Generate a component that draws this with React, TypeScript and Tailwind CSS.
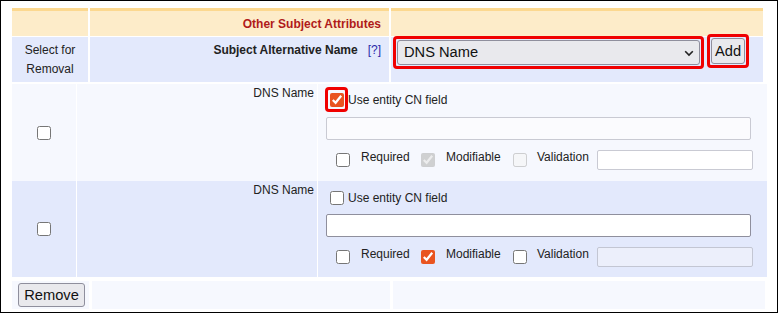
import React from 'react';

type SanProps = {
    first: boolean;
};

function Box({ checked = false, disabled = false }: { checked?: boolean; disabled?: boolean }) {
    return (
        <input
            type="checkbox"
            defaultChecked={checked}
            disabled={disabled}
            className="m-0 h-[14px] w-[14px] shrink-0 accent-[#e95420]"
        />
    );
}

function SanRow({ first }: SanProps) {
    const bg = first ? 'bg-[#f6f8fe]' : 'bg-[#e3e9fc]';
    return (
        <div className={`grid grid-cols-[64px_240px_449px] gap-x-px ${first ? 'h-[97px]' : 'h-[96px]'}`}>
            <div className={`${bg} flex items-center justify-center`}>
                <Box />
            </div>
            <div className={`${bg} pt-[2px] pr-[3px] text-right leading-[14px]`}>DNS Name</div>
            <div className={`${bg} flex flex-col`}>
                <div className={`${first ? 'mt-[3px]' : 'mt-[4px]'} flex h-[25px] items-center`}>
                    <span
                        className={`ml-[7px] flex h-[25px] w-[23px] items-center justify-center rounded-[4px] border-[3px] ${first ? 'border-[#f00000]' : 'border-transparent'}`}
                    >
                        <Box checked={first} />
                    </span>
                    <span className="leading-[14px]">Use entity CN field</span>
                </div>
                <input
                    type="text"
                    disabled={first}
                    className={`ml-[8px] ${first ? 'mt-[5px]' : 'mt-[4px]'} h-[23px] w-[425px] rounded-[2px] border ${first ? 'border-[#c9cad3] bg-[#fbfbfe]' : 'border-[#8f8f9d] bg-white'}`}
                />
                <div className="mt-[7px] flex h-[23px] items-start">
                    <span className="ml-[18px] mt-[6px] flex"><Box /></span>
                    <span className="ml-[11px] mt-[2px] w-[49px] leading-[16px]">Required</span>
                    <span className="ml-[11px] mt-[6px] flex"><Box checked disabled={first} /></span>
                    <span className="ml-[11px] mt-[2px] w-[55px] leading-[16px]">Modifiable</span>
                    <span className="ml-[12px] mt-[6px] flex"><Box disabled={first} /></span>
                    <span className="ml-[10px] mt-[2px] w-[52px] leading-[16px]">Validation</span>
                    <input
                        type="text"
                        disabled={!first}
                        className={`ml-[8px] mt-[3px] h-[20px] w-[156px] rounded-[2px] border ${first ? 'border-[#c9cad3] bg-white' : 'border-[#c3c6d3] bg-[#eceffb]'}`}
                    />
                </div>
            </div>
        </div>
    );
}

export default function App() {
    return (
        <div className="h-[313px] w-[778px] border border-black bg-white pl-[11px] pt-[7px] font-['Liberation_Sans',Arial,sans-serif] text-[12px] text-[#222]">
            {/* header */}
            <div className="grid grid-cols-[76px_299px_372px] gap-x-[2px] gap-y-px">
                <div className="h-[28px] border-t-[3px] border-[#fcd88f] bg-[#fdecc9]" />
                <div className="flex h-[28px] items-center justify-end border-t-[3px] border-[#fcd88f] bg-[#fdecc9] pr-[8px] font-bold text-[#b01a1a]">
                    Other Subject Attributes
                </div>
                <div className="h-[28px] border-t-[3px] border-[#fcd88f] bg-[#fdecc9]" />

                <div className="h-[45px] bg-[#e3e9fc] pt-[4px] text-center leading-[19px]">
                    Select for<br />Removal
                </div>
                <div className="h-[45px] bg-[#e3e9fc] pt-[4px] pr-[8px] text-right leading-[19px]">
                    <span className="font-bold">Subject Alternative Name</span>
                    <a className="ml-[10px] text-[#2b2baa]">[?]</a>
                </div>
                <div className="flex h-[45px] items-start bg-[#e3e9fc] pl-[2px]">
                    <div className="mt-[-1px] h-[33px] w-[311px] rounded-[4px] border-[3px] border-[#f00000] p-px">
                        <div className="relative h-full w-full">
                            <select className="h-full w-full appearance-none rounded-[3px] border border-[#8f8f9d] bg-[#e9e9ed] pl-[6px] text-[14.67px] leading-none text-[#111]">
                                <option>DNS Name</option>
                            </select>
                            <svg className="pointer-events-none absolute right-[6px] top-[10px]" width="10" height="7" viewBox="0 0 10 7">
                                <path d="M1.2 1.2 L5 5 L8.8 1.2" fill="none" stroke="#222" strokeWidth="1.6" />
                            </svg>
                        </div>
                    </div>
                    <div className="ml-[3px] mt-[-3px] h-[34px] w-[42px] rounded-[4px] border-[3px] border-[#f00000] p-px">
                        <button className="h-[26px] w-[34px] rounded-[3px] border border-[#8f8f9d] bg-[#e9e9ed] text-[14.67px] leading-none text-[#111]">
                            Add
                        </button>
                    </div>
                </div>
            </div>

            {/* entries */}
            <div className="mt-[2px]">
                <SanRow first />
                <SanRow first={false} />
            </div>

            {/* footer */}
            <div className="mt-[4px] grid h-[28px] grid-cols-[77px_298px_372px] gap-x-[3px]">
                <div className="bg-[#f6f8fe] pl-[6px] pt-[2px]">
                    <button className="h-[24px] w-[67px] rounded-[3px] border border-[#8f8f9d] bg-[#e9e9ed] text-[14.67px] leading-none text-[#111]">
                        Remove
                    </button>
                </div>
                <div className="bg-[#f6f8fe]" />
                <div className="bg-[#f6f8fe]" />
            </div>
        </div>
    );
}
